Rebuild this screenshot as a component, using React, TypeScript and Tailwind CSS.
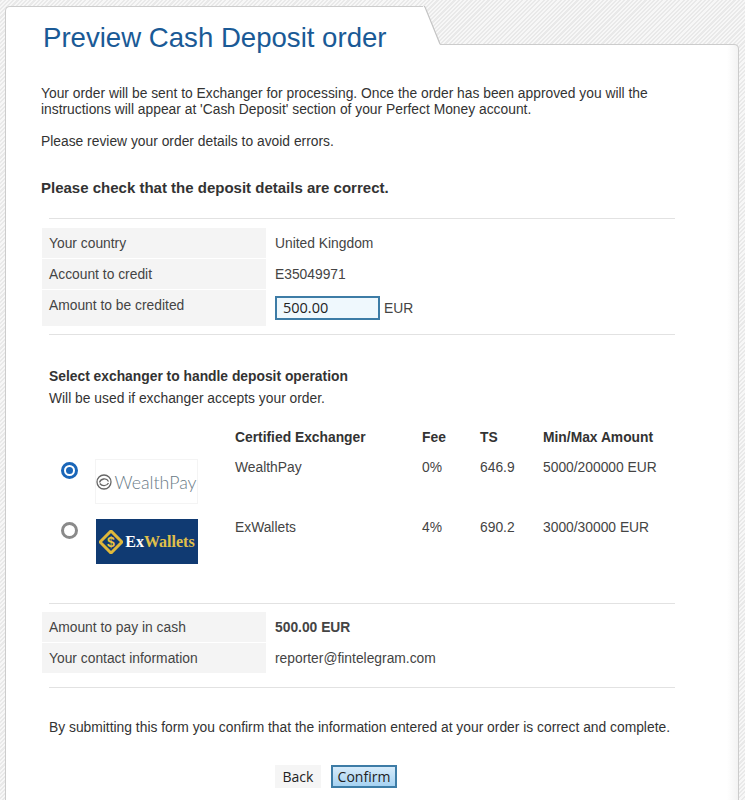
const sans = "font-['Liberation_Sans',Arial,sans-serif]";

const Row = ({ label, value, tall }: { label: string; value: React.ReactNode; tall?: boolean }) => (
  <div className={`flex mb-px ${tall ? "h-[36px]" : "h-[30px]"}`}>
    <div className="w-[224px] bg-[#f4f4f4] pl-[7px] pt-[7px] text-[#444]">{label}</div>
    <div className="pl-[9px] pt-[7px] text-[#444] flex-1">{value}</div>
  </div>
);

const Radio = ({ on }: { on?: boolean }) => (
  <div
    className={`w-[17px] h-[17px] rounded-full border-[3px] bg-white flex items-center justify-center ${
      on ? "border-[#1a66b8]" : "border-[#8a8a8a]"
    }`}
  >
    {on && <div className="w-[7px] h-[7px] rounded-full bg-[#1a66b8]" />}
  </div>
);

const WealthPayLogo = () => (
  <div className="w-[103px] h-[45px] border border-[#f4f4f4] bg-white flex items-center justify-center">
    <svg width="16" height="16" viewBox="0 0 16 16" fill="none" stroke="#666" strokeWidth="1.3" className="mr-[2px]">
      <circle cx="8" cy="8" r="7" />
      <path d="M3.5 8.5C4.5 4.5 10.5 3.5 12.5 7.5" />
      <path d="M3.8 9.5C6 12.5 10.5 12.5 12.5 9" />
    </svg>
    <span className="font-['Lato',sans-serif] font-light text-[17.8px] text-[#6a7b87]">WealthPay</span>
  </div>
);

const ExWalletsLogo = () => (
  <div className="w-[102px] h-[45px] bg-[#103a72] flex items-center justify-center">
    <svg width="24" height="24" viewBox="0 0 24 24">
      <path d="M12 1L23 12L12 23L1 12Z" fill="#103a72" stroke="#e0b83a" strokeWidth="3" />
      <text x="12" y="17" textAnchor="middle" fontSize="14" fontWeight="700" fill="#e8c23e" fontFamily="Liberation Sans">$</text>
    </svg>
    <span className="ml-[2px] font-['Liberation_Serif',serif] font-bold text-[16px] text-white">
      Ex<span className="text-[#e0c04a]">Wallets</span>
    </span>
  </div>
);

export default function App() {
  return (
    <div className={`h-[800px] overflow-hidden pl-[5px] pr-[6px] pt-[6px] text-[13.84px] leading-[16px] ${sans} bg-[repeating-linear-gradient(135deg,#e9e9e9_0px,#e9e9e9_1.5px,#f7f7f7_1.5px,#f7f7f7_3px)]`}>
      {/* tab */}
      <div className="flex h-[39px] -mb-px relative z-10">
        <div className="w-[418px] bg-white border-t border-l border-[#ccc] rounded-tl-[5px] pl-[37px] pt-[15px]">
          <h1 className="text-[27.6px] leading-[32px] text-[#1a5a96] font-normal whitespace-nowrap">Preview Cash Deposit order</h1>
        </div>
        <svg width="20" height="39" viewBox="0 0 20 39">
          <polygon points="0,0 2,0 17,39 0,39" fill="#fff" />
          <path d="M1 0 L2 1 L17 38" fill="none" stroke="#c4c4c4" strokeWidth="1.2" />
        </svg>
      </div>

      {/* panel */}
      <div className="h-[800px] border-t border-x border-[#ccc] rounded-tr-[5px] pl-[35px] bg-[linear-gradient(to_right,#fff_98.5%,#f3f3f3)]">
        <p className="pt-[40px] w-[640px] text-[#333]">
          Your order will be sent to Exchanger for processing. Once the order has been approved you will the instructions will appear at 'Cash Deposit' section of your Perfect Money account.
        </p>
        <p className="mt-[16px] text-[#333]">Please review your order details to avoid errors.</p>
        <p className="mt-[30px] font-bold text-[15px] leading-[18px] text-[#333]">Please check that the deposit details are correct.</p>

        <div className="ml-[8px] w-[626px] border-t border-[#e2e2e2] mt-[21px]" />
        <div className="ml-px mt-[9px]">
          <Row label="Your country" value="United Kingdom" />
          <Row label="Account to credit" value="E35049971" />
          <Row
            tall
            label="Amount to be credited"
            value={
              <div className="flex items-center -mt-[1px]">
                <div className="w-[105px] h-[24px] border-2 border-[#3d7ca6] bg-[#eff8fd] pl-[6px] text-[14.5px] leading-[20px] text-[#222] font-['Open_Sans',sans-serif]">
                  500.00
                </div>
                <span className="ml-[4px]">EUR</span>
              </div>
            }
          />
        </div>
        <div className="ml-[8px] w-[626px] border-t border-[#e2e2e2] mt-[8px]" />

        <p className="ml-[8px] mt-[33px] font-bold text-[#333]">Select exchanger to handle deposit operation</p>
        <p className="ml-[8px] mt-[6px] text-[#333]">Will be used if exchanger accepts your order.</p>

        <div className="ml-[8px] mt-[23px] text-[#444]">
          <div className="grid grid-cols-[186px_187px_58px_63px_auto] font-bold text-[#333] h-[30px]">
            <div />
            <div>Certified Exchanger</div>
            <div>Fee</div>
            <div>TS</div>
            <div>Min/Max Amount</div>
          </div>
          <div className="grid grid-cols-[186px_187px_58px_63px_auto] h-[60px]">
            <div className="flex">
              <div className="pl-[12px] pt-[3px] w-[46px]"><Radio on /></div>
              <WealthPayLogo />
            </div>
            <div>WealthPay</div>
            <div>0%</div>
            <div>646.9</div>
            <div>5000/200000 EUR</div>
          </div>
          <div className="grid grid-cols-[186px_187px_58px_63px_auto] h-[84px]">
            <div className="flex">
              <div className="pl-[12px] pt-[3px] w-[46px]"><Radio /></div>
              <div className="ml-px"><ExWalletsLogo /></div>
            </div>
            <div>ExWallets</div>
            <div>4%</div>
            <div>690.2</div>
            <div>3000/30000 EUR</div>
          </div>
        </div>

        <div className="ml-[8px] w-[626px] border-t border-[#e2e2e2]" />
        <div className="ml-px mt-[8px]">
          <Row label="Amount to pay in cash" value={<b>500.00 EUR</b>} />
          <Row label="Your contact information" value="reporter@fintelegram.com" />
        </div>
        <div className="ml-[8px] w-[626px] border-t border-[#e2e2e2] mt-[14px]" />

        <p className="ml-[8px] mt-[31px] text-[#333] whitespace-nowrap">By submitting this form you confirm that the information entered at your order is correct and complete.</p>

        <div className="flex ml-[234px] mt-[30px] gap-[10px] font-['Open_Sans',sans-serif] text-[14px] leading-[18px] text-[#222]">
          <button className="w-[46px] h-[23px] bg-[#f5f5f5]">Back</button>
          <button className="w-[66px] h-[23px] border-2 border-[#3d7ca6] bg-[linear-gradient(#d6ebfa,#a6d2f2)]">Confirm</button>
        </div>
      </div>
    </div>
  );
}
